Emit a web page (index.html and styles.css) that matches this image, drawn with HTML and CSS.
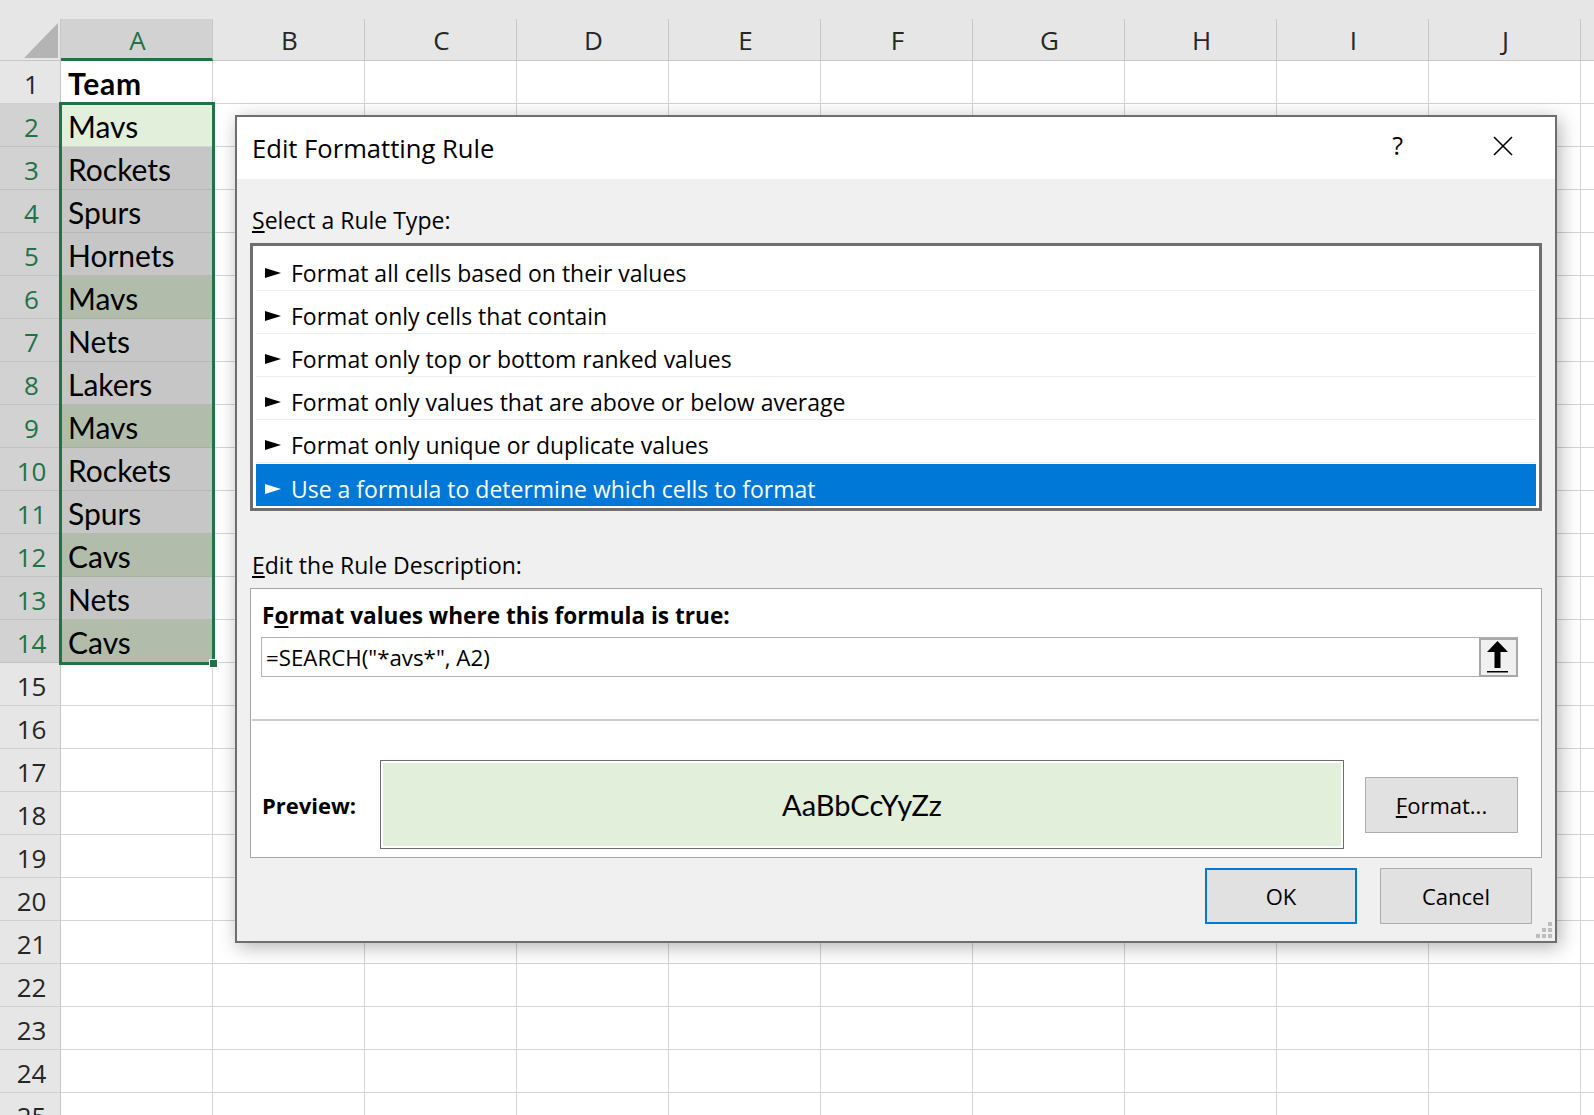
FILE: index.html
```html
<!DOCTYPE html>
<html lang="en">
<head>
    <meta charset="UTF-8">
    <title>Edit Formatting Rule</title>
    <link rel="stylesheet" href="styles.css">
</head>
<body>
  <div class="sheet">
      <div class="top-strip"></div>

      <div class="head-row">
          <div class="corner">
              <svg width="60" height="41" viewBox="0 0 60 41"><polygon points="24,39 58,39 58,4" fill="#b4b4b4"/></svg>
          </div>
          <div class="col-head active">A</div>
          <div class="col-head">B</div>
          <div class="col-head">C</div>
          <div class="col-head">D</div>
          <div class="col-head">E</div>
          <div class="col-head">F</div>
          <div class="col-head">G</div>
          <div class="col-head">H</div>
          <div class="col-head">I</div>
          <div class="col-head">J</div>
          <div class="col-head last"></div>
      </div>

      <div class="row"><div class="row-head">1</div><div class="cell bold">Team</div><div class="rest"></div></div>
      <div class="row"><div class="row-head sel">2</div><div class="cell active">Mavs</div><div class="rest"></div></div>
      <div class="row"><div class="row-head sel">3</div><div class="cell sel">Rockets</div><div class="rest"></div></div>
      <div class="row"><div class="row-head sel">4</div><div class="cell sel">Spurs</div><div class="rest"></div></div>
      <div class="row"><div class="row-head sel">5</div><div class="cell sel">Hornets</div><div class="rest"></div></div>
      <div class="row"><div class="row-head sel">6</div><div class="cell hit">Mavs</div><div class="rest"></div></div>
      <div class="row"><div class="row-head sel">7</div><div class="cell sel">Nets</div><div class="rest"></div></div>
      <div class="row"><div class="row-head sel">8</div><div class="cell sel">Lakers</div><div class="rest"></div></div>
      <div class="row"><div class="row-head sel">9</div><div class="cell hit">Mavs</div><div class="rest"></div></div>
      <div class="row"><div class="row-head sel">10</div><div class="cell sel">Rockets</div><div class="rest"></div></div>
      <div class="row"><div class="row-head sel">11</div><div class="cell sel">Spurs</div><div class="rest"></div></div>
      <div class="row"><div class="row-head sel">12</div><div class="cell hit">Cavs</div><div class="rest"></div></div>
      <div class="row"><div class="row-head sel">13</div><div class="cell sel">Nets</div><div class="rest"></div></div>
      <div class="row"><div class="row-head sel">14</div><div class="cell hit">Cavs</div><div class="rest"></div></div>
      <div class="row"><div class="row-head">15</div><div class="cell"></div><div class="rest"></div></div>
      <div class="row"><div class="row-head">16</div><div class="cell"></div><div class="rest"></div></div>
      <div class="row"><div class="row-head">17</div><div class="cell"></div><div class="rest"></div></div>
      <div class="row"><div class="row-head">18</div><div class="cell"></div><div class="rest"></div></div>
      <div class="row"><div class="row-head">19</div><div class="cell"></div><div class="rest"></div></div>
      <div class="row"><div class="row-head">20</div><div class="cell"></div><div class="rest"></div></div>
      <div class="row"><div class="row-head">21</div><div class="cell"></div><div class="rest"></div></div>
      <div class="row"><div class="row-head">22</div><div class="cell"></div><div class="rest"></div></div>
      <div class="row"><div class="row-head">23</div><div class="cell"></div><div class="rest"></div></div>
      <div class="row"><div class="row-head">24</div><div class="cell"></div><div class="rest"></div></div>
      <div class="row"><div class="row-head">25</div><div class="cell"></div><div class="rest"></div></div>

      <!-- selected range A2:A14 -->
      <div class="selection"><span class="fill-handle"></span></div>
  </div>

  <div class="dialog">
      <div class="dialog-title">
          <span class="title-text">Edit Formatting Rule</span>
          <span class="help">?</span>
          <span class="close">
              <svg width="20" height="20" viewBox="0 0 20 20"><path d="M1 1L19 19M19 1L1 19" stroke="#000" stroke-width="1.6"/></svg>
          </span>
      </div>

      <div class="dialog-body">
          <div class="label"><u>S</u>elect a Rule Type:</div>
          <ul class="rule-list">
              <li><span class="pointer"></span>Format all cells based on their values</li>
              <li><span class="pointer"></span>Format only cells that contain</li>
              <li><span class="pointer"></span>Format only top or bottom ranked values</li>
              <li><span class="pointer"></span>Format only values that are above or below average</li>
              <li><span class="pointer"></span>Format only unique or duplicate values</li>
              <li class="selected"><span class="pointer"></span>Use a formula to determine which cells to format</li>
          </ul>

          <div class="label desc-label"><u>E</u>dit the Rule Description:</div>
          <div class="desc-box">
              <div class="desc-title">F<u>o</u>rmat values where this formula is true:</div>
              <div class="formula">
                  <span class="formula-text">=SEARCH("*avs*", A2)</span>
                  <span class="ref-btn">
                      <svg width="35" height="35" viewBox="0 0 35 35">
                          <path d="M16.5 1 L27 12 L19.5 12 L19.5 28 L13.5 28 L13.5 12 L6 12 Z" fill="#000"/>
                          <rect x="6" y="31" width="21" height="1.5" fill="#000"/>
                      </svg>
                  </span>
              </div>
              <div class="desc-sep"></div>
              <div class="preview-row">
                  <span class="preview-label">Preview:</span>
                  <div class="preview-box"><div class="preview-fill">AaBbCcYyZz</div></div>
                  <button class="btn format-btn"><u>F</u>ormat...</button>
              </div>
          </div>

          <div class="actions">
              <button class="btn ok-btn">OK</button>
              <button class="btn">Cancel</button>
          </div>
      </div>

      <svg class="grip" width="17" height="17" viewBox="0 0 17 17">
          <rect x="12" y="0" width="4" height="4" fill="#bdbdbd"/>
          <rect x="6" y="6" width="4" height="4" fill="#bdbdbd"/>
          <rect x="12" y="6" width="4" height="4" fill="#bdbdbd"/>
          <rect x="0" y="12" width="4" height="4" fill="#bdbdbd"/>
          <rect x="6" y="12" width="4" height="4" fill="#bdbdbd"/>
          <rect x="12" y="12" width="4" height="4" fill="#bdbdbd"/>
      </svg>
  </div>
</body>
</html>
```

FILE: styles.css
```css
/* General */

*
{
    box-sizing: border-box;
    margin: 0;
    padding: 0;
}
body
{
    width: 1594px;
    height: 1115px;
    overflow: hidden;
    background-color: #fff;
    font-family: Lato, "Liberation Sans", sans-serif;
    color: #000;
}

/* Spreadsheet */

.sheet
{
    position: relative;
}
.top-strip
{
    height: 19px;
    background-color: #e6e6e6;
}
.head-row
{
    display: flex;
    height: 42px;
    background-color: #e6e6e6;
}
.corner
{
    width: 61px;
    border-right: 1px solid #c6c6c6;
    border-bottom: 1px solid #c6c6c6;
}
.corner svg
{
    display: block;
}
.col-head
{
    width: 152px;
    border-right: 1px solid #c6c6c6;
    border-bottom: 1px solid #c6c6c6;
    text-align: center;
    font-family: "Open Sans", sans-serif;
    font-size: 26px;
    padding: 1px 0 0 2px;
    line-height: 40px;
    color: #262626;
}
.col-head.active
{
    background-color: #d2d2d2;
    color: #217346;
    border-bottom: 3px solid #217346;
}
.col-head.last
{
    flex: 1;
    border-right: none;
}
.row
{
    display: flex;
    height: 43px;
}
.row-head
{
    width: 61px;
    background-color: #e6e6e6;
    border-right: 1px solid #c6c6c6;
    border-bottom: 1px solid #d0d0d0;
    text-align: center;
    font-family: "Open Sans", sans-serif;
    font-size: 26px;
    padding: 4px 0 0 3px;
    line-height: 38px;
    color: #262626;
}
.row-head.sel
{
    background-color: #d2d2d2;
    color: #217346;
    border-bottom-color: #c2c2c2;
}
.cell
{
    width: 152px;
    border-right: 1px solid #d4d4d4;
    border-bottom: 1px solid #d4d4d4;
    padding: 2px 0 0 7px;
    font-size: 30px;
    line-height: 40px;
}
.cell.bold
{
    font-weight: 700;
    letter-spacing: 0.8px;
}
.cell.active
{
    background-color: #e2efda;
}
.cell.sel
{
    background-color: #c6c6c6;
    border-bottom-color: #b9b9b9;
}
.cell.hit
{
    background-color: #b1bcab;
    border-bottom-color: #a7b1a2;
}
.rest
{
    flex: 1;
    border-bottom: 1px solid #d4d4d4;
    background: repeating-linear-gradient(to right, transparent 0 151px, #d4d4d4 151px 152px);
}
.selection
{
    position: absolute;
    left: 59px;
    top: 102px;
    width: 156px;
    height: 563px;
    border: 3px solid #217346;
}
.fill-handle
{
    position: absolute;
    right: -6px;
    bottom: -6px;
    width: 9px;
    height: 9px;
    background-color: #217346;
    border: 1px solid #fff;
}

/* Dialog */

.dialog
{
    position: absolute;
    left: 235px;
    top: 115px;
    width: 1322px;
    height: 828px;
    border: 2px solid #6e6e6e;
    background-color: #f0f0f0;
    box-shadow: 3px 4px 18px rgba(0, 0, 0, 0.3);
    font-family: "Open Sans", sans-serif;
    font-size: 23px;
}
.dialog-title
{
    display: flex;
    align-items: center;
    height: 62px;
    padding-left: 15px;
    background-color: #fff;
}
.title-text
{
    flex: 1;
    font-size: 25.6px;
}
.help
{
    font-size: 25px;
    margin-right: 90px;
    margin-top: -6px;
}
.close
{
    margin-right: 42px;
    margin-top: -4px;
}
.close svg
{
    display: block;
}
.dialog-body
{
    padding: 0 13px;
}
.label
{
    margin-top: 26px;
    line-height: 30px;
    padding-left: 2px;
}
.desc-label
{
    margin-top: 39px;
}
.rule-list
{
    list-style: none;
    margin-top: 8px;
    height: 268px;
    border: 3px solid #6e6e6e;
    background-color: #fff;
    padding: 2px 3px;
}
.rule-list li
{
    display: flex;
    align-items: center;
    height: 43px;
    padding: 7px 0 0 8px;
    border-bottom: 1px solid #ececec;
}
.rule-list li.selected
{
    height: 42px;
    margin-top: 1px;
    background-color: #0078d7;
    color: #fff;
    border-bottom: none;
}
.pointer
{
    width: 0;
    height: 0;
    border-left: 16px solid currentColor;
    border-top: 5px solid transparent;
    border-bottom: 5px solid transparent;
    margin: 0 10px 0 1px;
}
.desc-box
{
    margin-top: 8px;
    border: 1px solid #a5a5a5;
    background-color: #fff;
    padding: 12px 0 8px 0;
}
.desc-title
{
    padding-left: 11px;
    line-height: 30px;
    font-size: 22.6px;
    font-weight: 700;
}
.formula
{
    display: flex;
    align-items: center;
    height: 40px;
    margin: 6px 23px 0 10px;
    border: 1px solid #b1b1b1;
    font-size: 22.3px;
}
.formula-text
{
    flex: 1;
    padding-left: 4px;
}
.ref-btn
{
    width: 39px;
    height: 39px;
    margin: -1px -1px -1px 0;
    border: 2px solid #a8a8a8;
    background-color: #f0f0f0;
}
.ref-btn svg
{
    display: block;
}
.desc-sep
{
    height: 2px;
    margin: 42px 2px 0 1px;
    background-color: #cbcbcb;
}
.preview-row
{
    display: flex;
    align-items: center;
    margin-top: 39px;
    padding-left: 11px;
}
.preview-label
{
    width: 118px;
    font-size: 22px;
    font-weight: 700;
}
.preview-box
{
    width: 964px;
    height: 89px;
    border: 1px solid #6d6d6d;
    padding: 2px;
    background-color: #fff;
}
.preview-fill
{
    display: flex;
    align-items: center;
    justify-content: center;
    height: 100%;
    background-color: #e2efda;
    font-family: Lato, sans-serif;
    font-size: 29px;
}
.btn
{
    font-family: inherit;
    font-size: 22px;
    color: #000;
    background-color: #e1e1e1;
    border: 1px solid #adadad;
}
.format-btn
{
    width: 153px;
    height: 56px;
    margin-left: 21px;
}
.actions
{
    display: flex;
    justify-content: flex-end;
    gap: 23px;
    margin: 10px 10px 0 0;
}
.actions .btn
{
    width: 152px;
    height: 56px;
}
.ok-btn
{
    border: 2px solid #0078d7;
}
.grip
{
    position: absolute;
    right: 2px;
    bottom: 2px;
}
```
